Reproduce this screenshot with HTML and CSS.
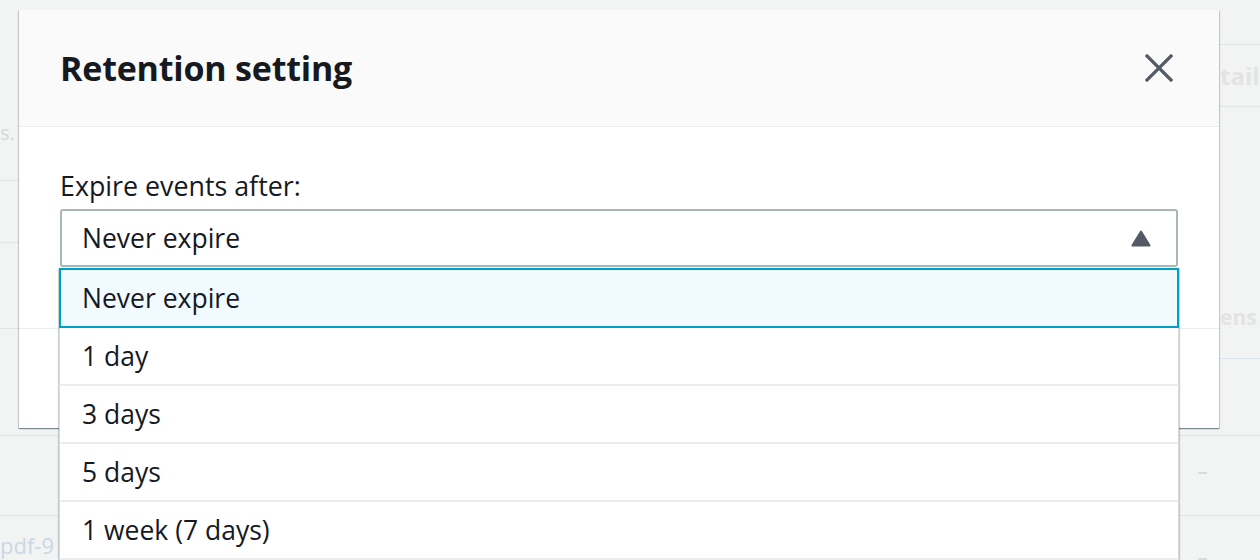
FILE: index.html
```html
<!DOCTYPE html>
<html lang="en">
<head>
<meta charset="utf-8">
<title>Retention setting</title>
<link rel="stylesheet" href="styles.css">
</head>
<body>
<div class="screen">
  <div class="backdrop">
    <div class="bd-col bd-left">
      <div class="bd-row bd-r1"><span class="bd-text">s.</span></div>
      <div class="bd-row bd-r2"></div>
      <div class="bd-row bd-r3"></div>
      <div class="bd-row bd-r4 blue"></div>
      <div class="bd-row bd-r5"></div>
      <div class="bd-row bd-r6"><span class="bd-link">pdf-9</span></div>
    </div>
    <div class="bd-col bd-right">
      <div class="bd-row bd-q1"></div>
      <div class="bd-row bd-q2"><span class="bd-head">tail</span></div>
      <div class="bd-row bd-q3"><span class="bd-head bd-ens">ens</span></div>
      <div class="bd-row bd-q4 blue"></div>
      <div class="bd-row bd-q5 blue"></div>
      <div class="bd-row bd-q6"><span class="bd-dash"></span></div>
      <div class="bd-row bd-q7"><span class="bd-dash"></span></div>
    </div>
  </div>

  <div class="modal" role="dialog" aria-labelledby="modal-title">
    <div class="modal-header">
      <h2 id="modal-title" class="modal-title">Retention setting</h2>
      <button class="close-btn" aria-label="Close">
        <svg width="28" height="28" viewBox="0 0 28 28" aria-hidden="true">
          <path d="M2 2 L26 26 M26 2 L2 26" stroke="#545b64" stroke-width="3.2" stroke-linecap="square" fill="none"/>
        </svg>
      </button>
    </div>
    <div class="modal-body">
      <label class="field-label">Expire events after:</label>
      <div class="select-wrap">
        <div class="select">
          <span class="select-value">Never expire</span>
          <svg class="caret" width="20" height="17" viewBox="0 0 20 17" aria-hidden="true">
            <path d="M10 1.5 L18.6 15.5 L1.4 15.5 Z" fill="#545b64" stroke="#545b64" stroke-width="2" stroke-linejoin="round"/>
          </svg>
        </div>
        <ul class="menu" role="listbox">
          <li class="option selected" role="option">Never expire</li>
          <li class="option" role="option">1 day</li>
          <li class="option" role="option">3 days</li>
          <li class="option" role="option">5 days</li>
          <li class="option" role="option">1 week (7 days)</li>
        </ul>
      </div>
    </div>
    <div class="modal-footer"></div>
  </div>
</div>
</body>
</html>
```

FILE: styles.css
```css
* { box-sizing: border-box; }

html, body {
  margin: 0;
  padding: 0;
}

body {
  width: 1260px;
  height: 560px;
  overflow: hidden;
  background: #f2f3f3;
  font-family: "Open Sans", "Noto Sans", "Liberation Sans", sans-serif;
  color: #16191f;
}

.screen {
  position: relative;
  width: 1260px;
  height: 560px;
  overflow: hidden;
}

/* faint page beneath the dialog */
.backdrop {
  display: flex;
  justify-content: space-between;
  height: 560px;
}

.bd-col {
  display: flex;
  flex-direction: column;
}

.bd-left { width: 60px; }
.bd-right { width: 81px; }

.bd-row {
  flex: none;
  border-bottom: 1px solid #e3e6e6;
  display: flex;
  align-items: center;
}
.bd-row.blue { border-bottom-color: #dbe3ee; }

.bd-r1 { height: 181px; align-items: flex-start; padding-top: 118px; }
.bd-r2 { height: 62px; }
.bd-r3 { height: 86px; }
.bd-r4 { height: 107px; }
.bd-r5 { height: 80px; }
.bd-r6 { height: 44px; border-bottom: 0; align-items: flex-start; padding-top: 16px; }

.bd-text {
  font-size: 20px;
  line-height: 30px;
  color: #d3d8d8;
  white-space: nowrap;
}
.bd-link {
  font-size: 22px;
  line-height: 26px;
  color: #c9d7e6;
  white-space: nowrap;
}

.bd-q1 { height: 45px; }
.bd-q2 { height: 62px; padding-left: 41px; }
.bd-q3 { height: 221px; align-items: flex-end; padding-left: 41px; border-bottom: 0; }
.bd-q4 { height: 31px; }
.bd-q5 { height: 77px; }
.bd-q6 { height: 80px; padding-left: 19px; padding-bottom: 6px; }
.bd-q7 { height: 44px; border-bottom: 0; padding-left: 19px; align-items: flex-end; }

.bd-head {
  font-size: 24px;
  font-weight: 700;
  color: #e2e4e4;
  white-space: nowrap;
  line-height: 1;
}
.bd-ens { font-size: 21px; }
.bd-dash {
  display: block;
  width: 9px;
  height: 2px;
  background: #d9dcdc;
}

/* dialog */
.modal {
  position: absolute;
  left: 19px;
  top: 10px;
  width: 1200px;
  height: 418px;
  background: #ffffff;
  box-shadow: 0 1px 1px 0 rgba(0, 28, 36, 0.3),
              1px 1px 1px 0 rgba(0, 28, 36, 0.15),
              -1px 1px 1px 0 rgba(0, 28, 36, 0.15);
  display: flex;
  flex-direction: column;
}

.modal-header {
  height: 117px;
  flex: none;
  background: #fafafa;
  border-bottom: 1px solid #eaeded;
  display: flex;
  align-items: center;
  justify-content: space-between;
  padding: 0 46px 0 41px;
}

.modal-title {
  margin: 0;
  font-size: 34px;
  font-weight: 700;
  line-height: 44px;
  letter-spacing: -0.2px;
  color: #16191f;
}

.close-btn {
  border: 0;
  background: transparent;
  padding: 0;
  width: 28px;
  height: 28px;
  display: flex;
  cursor: pointer;
}

.modal-body {
  height: 201px;
  flex: none;
  padding: 43px 41px 0 41px;
}

.field-label {
  display: block;
  font-size: 26.8px;
  line-height: 32px;
  margin-bottom: 7px;
  color: #16191f;
}

.select-wrap {
  position: relative;
}

.select {
  height: 58px;
  border: 2px solid #aab7b8;
  border-radius: 3px;
  background: #fff;
  display: flex;
  align-items: center;
  justify-content: space-between;
  padding: 0 25px 0 20px;
}

.select-value {
  font-size: 26.5px;
  line-height: 32px;
}

.caret { display: block; }

.menu {
  position: absolute;
  top: calc(100% + 1px);
  left: -1px;
  right: -1px;
  margin: 0;
  padding: 0;
  list-style: none;
  background: #fff;
  box-shadow: 0 1px 1px 0 rgba(0, 28, 36, 0.3),
              1px 1px 1px 0 rgba(0, 28, 36, 0.15),
              -1px 1px 1px 0 rgba(0, 28, 36, 0.15);
  z-index: 2;
}

.option {
  height: 58px;
  border-left: 1px solid #d5dbdb;
  border-right: 1px solid #d5dbdb;
  border-bottom: 2px solid #eaeded;
  padding-left: 22px;
  display: flex;
  align-items: center;
  font-size: 26.5px;
  line-height: 32px;
}

.option.selected {
  height: 60px;
  background: #f1faff;
  border: 2px solid #00a1c9;
  padding-left: 21px;
}

.modal-footer {
  flex: 1;
  border-top: 1px solid #eaeded;
}
```
